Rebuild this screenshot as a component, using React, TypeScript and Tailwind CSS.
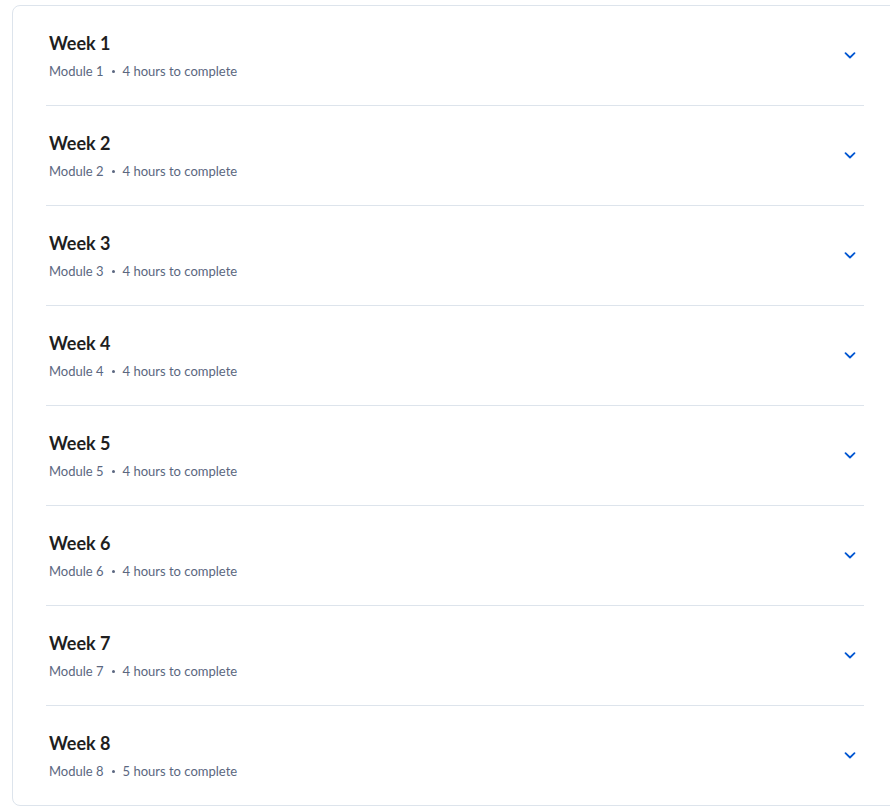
const weeks = [
  { week: 1, module: 1, hours: 4 },
  { week: 2, module: 2, hours: 4 },
  { week: 3, module: 3, hours: 4 },
  { week: 4, module: 4, hours: 4 },
  { week: 5, module: 5, hours: 4 },
  { week: 6, module: 6, hours: 4 },
  { week: 7, module: 7, hours: 4 },
  { week: 8, module: 8, hours: 5 },
];

const Chevron = () => (
  <svg width="16" height="16" viewBox="0 0 16 16" fill="none">
    <path
      d="M3.5 6.2l4.5 4.3 4.5-4.3"
      stroke="#0056d2"
      strokeWidth="1.8"
      strokeLinecap="round"
      strokeLinejoin="round"
    />
  </svg>
);

const App = () => {
  return (
    <div className="min-h-screen bg-white pt-[5px] pl-3 overflow-hidden font-['Lato',sans-serif]">
      <div className="w-[886px] rounded-lg border border-[#dde4ec] bg-white px-[33px]">
        {weeks.map((w, i) => (
          <div
            key={w.week}
            className={
              i < weeks.length - 1
                ? "flex h-[100px] items-center justify-between border-b border-[#dde4ec] pb-[1px]"
                : "flex h-[99px] items-center justify-between pb-[1px]"
            }
          >
            <div className="mt-[2px] pl-[3px]">
              <h3 className="text-[18px] leading-6 font-bold text-[#1f1f1f]">
                Week {w.week}
              </h3>
              <div className="mt-[6px] flex items-center text-[13px] leading-5 text-[#5b6780]">
                <span>Module {w.module}</span>
                <span className="mx-[8px] h-[3px] w-[3px] rounded-full bg-[#5b6780]" />
                <span>{w.hours} hours to complete</span>
              </div>
            </div>
            <div className="mr-[2px] flex h-6 w-6 items-center justify-center">
              <Chevron />
            </div>
          </div>
        ))}
      </div>
    </div>
  );
};

export default App;
